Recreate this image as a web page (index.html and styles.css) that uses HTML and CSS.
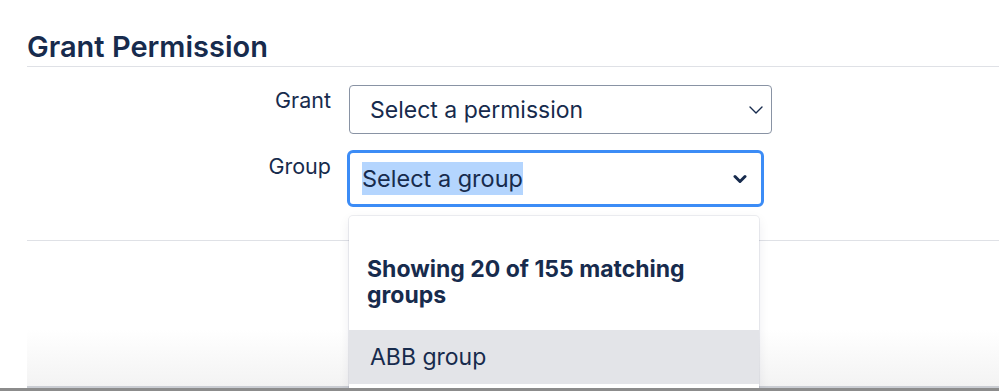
FILE: index.html
```html
<!DOCTYPE html>
<html lang="en">
<head>
  <meta charset="UTF-8" />
  <meta name="viewport" content="width=device-width, initial-scale=1.0" />
  <title>Grant Permission</title>
  <link rel="stylesheet" href="styles.css">
</head>
<body>
  <div class="page">
    <h2 class="title">Grant Permission</h2>

    <form class="grant-form">
      <div class="row">
        <label class="label">Grant</label>
        <div class="select select-permission">
          <span>Select a permission</span>
          <svg class="chev" width="14" height="8" viewBox="0 0 14 8"><path d="M1 1l6 6 6-6" fill="none" stroke="#172b4d" stroke-width="1.4" stroke-linecap="round" stroke-linejoin="round"/></svg>
        </div>
      </div>

      <div class="row">
        <label class="label label-group">Group</label>
        <div class="group-field">
          <div class="select select-group">
            <span class="selected">Select a group</span>
            <svg class="chev" width="14" height="10" viewBox="0 0 14 10"><path d="M2 2.5l5 5 5-5" fill="none" stroke="#172b4d" stroke-width="3" stroke-linecap="round" stroke-linejoin="round"/></svg>
          </div>

          <div class="menu">
            <div class="menu-heading">Showing 20 of 155 matching groups</div>
            <div class="menu-item active">ABB group</div>
          </div>
        </div>
      </div>
    </form>

    <div class="footer-line"></div>
  </div>

  <div class="bottom-fade"></div>
  <div class="bottom-bar"></div>
</body>
</html>
```

FILE: styles.css
```css
* { box-sizing: border-box; }

body {
  margin: 0;
  height: 391px;
  overflow: hidden;
  background: #fff;
  color: #172b4d;
  font-family: Inter, "Noto Sans", sans-serif;
  display: flex;
  flex-direction: column;
}

.page {
  flex: 1;
  padding-left: 27px;
}

.title {
  margin: 29px 0 0;
  padding-bottom: 2px;
  font-size: 29px;
  line-height: 35px;
  font-weight: 600;
  border-bottom: 1px solid #dfe1e6;
}

.grant-form {
  padding-top: 18px;
  display: flex;
  flex-direction: column;
  gap: 16px;
}

.row {
  display: flex;
  gap: 18px;
}

.label {
  width: 304px;
  text-align: right;
  font-size: 21.5px;
  line-height: 26px;
  padding-top: 2px;
}

.label-group {
  padding-top: 3px;
}

.select {
  display: flex;
  align-items: center;
  justify-content: space-between;
  font-size: 23px;
  background: #fff;
}

.select-permission {
  width: 423px;
  height: 49px;
  padding: 0 8px 0 20px;
  border: 1px solid #8993a4;
  border-radius: 4px;
}

.group-field {
  position: relative;
  margin-left: -2px;
}

.select-group {
  width: 417px;
  height: 57px;
  padding: 0 14px 0 12px;
  border: 3px solid #3c8cf6;
  border-radius: 6px;
  font-size: 23.5px;
}

.selected {
  background: #b4d5fe;
  padding: 2px 0;
}

.chev { display: block; }

.menu {
  position: absolute;
  top: 66px;
  left: 2px;
  width: 410px;
  background: #fff;
  border-radius: 4px;
  box-shadow: 0 0 0 1px rgba(9, 30, 66, 0.07), 0 4px 12px rgba(9, 30, 66, 0.08);
  padding: 40px 0 8px;
  z-index: 10;
}

.menu-heading {
  padding: 0 40px 0 18px;
  font-size: 23px;
  line-height: 26px;
  font-weight: 700;
  margin-bottom: 22px;
}

.menu-item {
  height: 54px;
  padding: 0 21px;
  display: flex;
  align-items: center;
  font-size: 23px;
}

.menu-item.active {
  background: #e3e4e8;
}

.footer-line {
  margin-top: 33px;
  border-top: 1px solid #dfe1e6;
}

.bottom-fade {
  height: 58px;
  margin-left: 27px;
  background: linear-gradient(#fff, #f3f3f3);
  border-bottom: 2px solid #c9ccd2;
}

.bottom-bar {
  height: 3px;
  background: #8c8c8c;
  position: relative;
  z-index: 20;
}
```
